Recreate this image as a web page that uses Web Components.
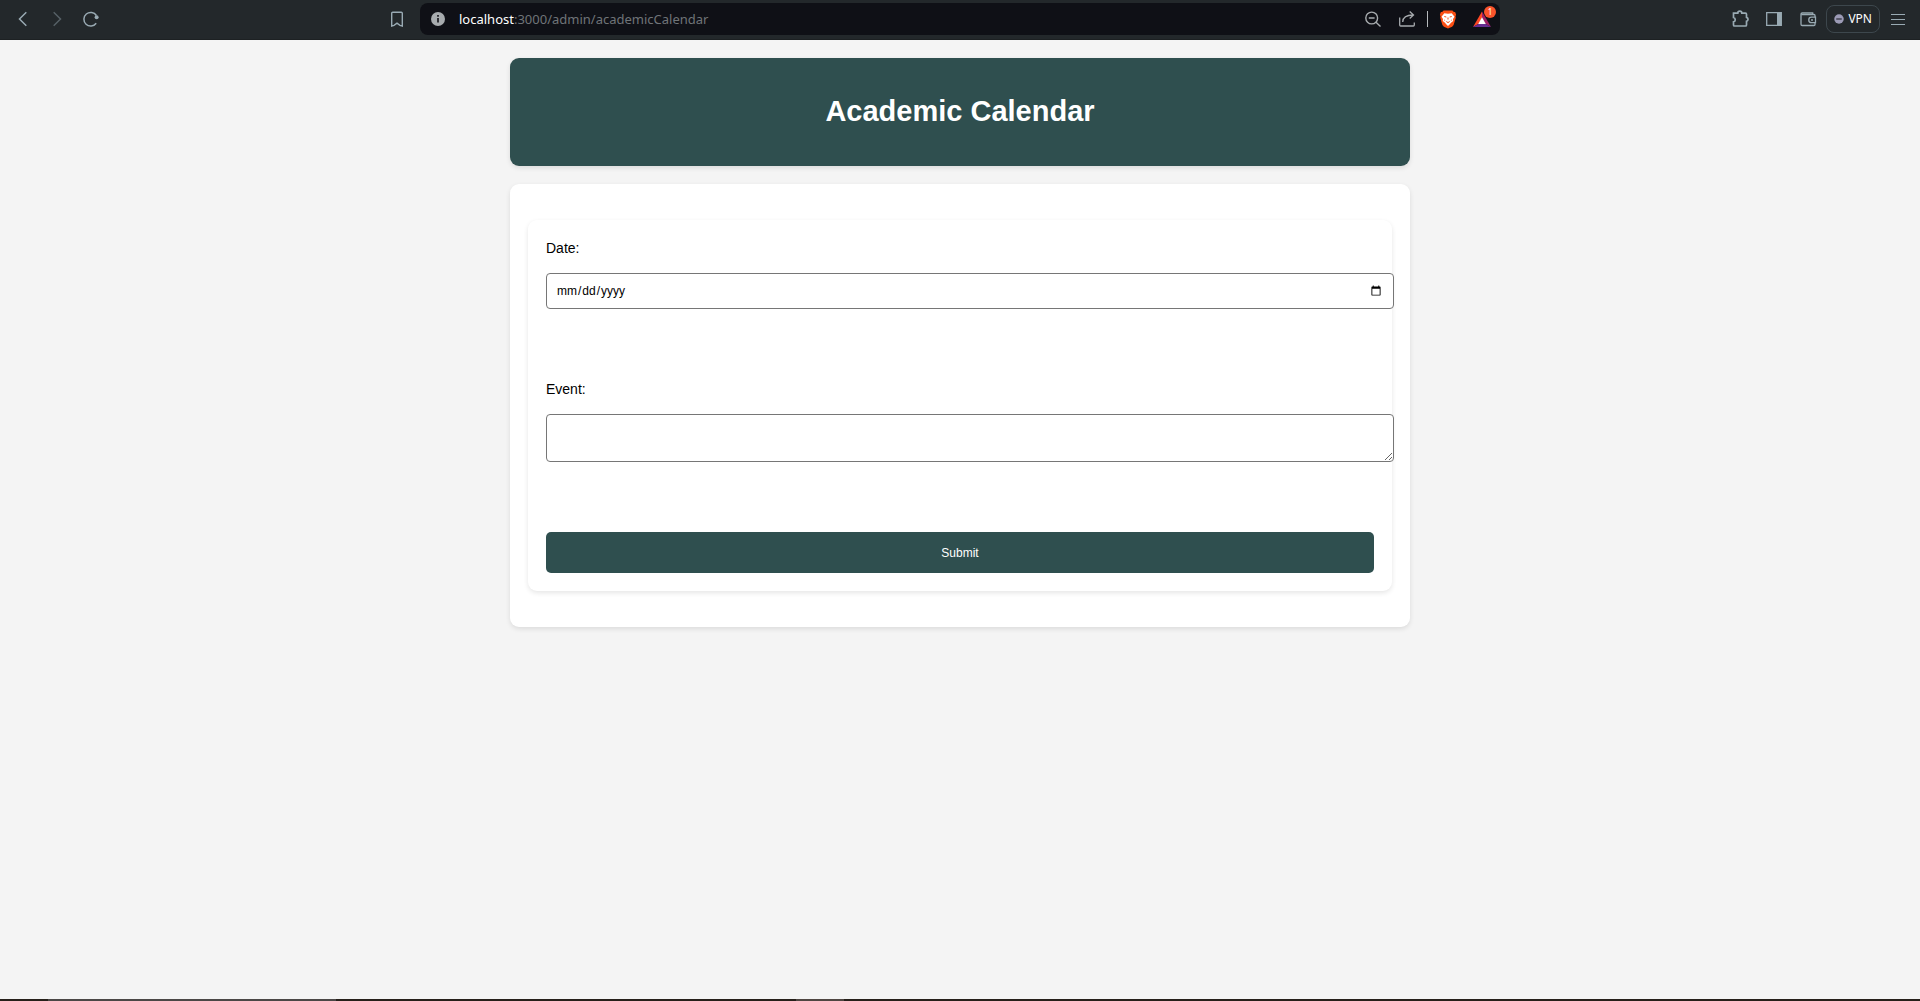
<!DOCTYPE html>
<html lang="en">
<head>
<meta charset="utf-8">
<title>Academic Calendar</title>
<style>
  html, body { margin: 0; height: 100%; }
  body { background: #f4f4f4; font-family: "Liberation Sans", Arial, sans-serif; font-size: 14px; color: #000; }
</style>
</head>
<body>
<app-window>
  <browser-toolbar slot="toolbar" host="localhost" path=":3000/admin/academicCalendar"></browser-toolbar>
  <page-banner>Academic Calendar</page-banner>
  <content-card><event-form></event-form></content-card>
  <task-strip slot="strip"></task-strip>
</app-window>

<script>
function define(name, html, setup) {
  const template = document.createElement('template');
  template.innerHTML = html;
  customElements.define(name, class extends HTMLElement {
    constructor() {
      super();
      this.attachShadow({ mode: 'open' }).append(template.content.cloneNode(true));
    }
    connectedCallback() { if (setup) setup(this, this.shadowRoot); }
  });
}

define('app-window', `
  <style>
    :host { display: flex; flex-direction: column; min-height: 100vh; }
    main { flex: 1; width: 100%; max-width: 900px; margin: 0 auto; padding: 18px 0; box-sizing: border-box;
           display: flex; flex-direction: column; gap: 18px; }
  </style>
  <slot name="toolbar"></slot>
  <main><slot></slot></main>
  <slot name="strip"></slot>`);

const icons = {
  back: '<path d="M13.3 3.300 6.500 10l6.800 6.700" stroke-width="1.500"/>',
  forward: '<path d="M6.700 3.300l6.800 6.700-6.800 6.700" stroke-width="1.500"/>',
  reload: '<path d="M15.200 14.200A6.800 6.800 0 1 1 15.400 6.500" stroke-width="1.500"/><circle cx="15.600" cy="8.300" r="2" fill="currentColor" stroke="none"/>',
  bookmark: '<path d="M4.700 4.200a1 1 0 0 1 1-1h8.600a1 1 0 0 1 1 1v12.800l-2.300-.6L10 14.200l-3 2.200-2.300.6z" stroke-width="1.400"/>',
  info: '<circle cx="10" cy="10" r="7" fill="currentColor" stroke="none"/><path d="M10 9v4.600M10 6v1.700" stroke="#0f1016" stroke-width="1.600"/>',
  zoomout: '<circle cx="8.700" cy="9" r="5.900" stroke-width="1.400"/><path d="M13 13.300l4.500 4.300M5.800 9h5.800" stroke-width="1.400"/>',
  share: '<path d="M2.700 8.500v7.500a1 1 0 0 0 1 1h12.600a1 1 0 0 0 1-1v-2.500M5.700 13c.2-4.500 3-7 10.300-7M12.700 2.500 16.500 6l-3.800 3.500" stroke-width="1.300"/>',
  brave: '<path d="M5.600 1.500h8.800l1.500 1.600h1.200l1 2.500-.6 2 .3 1.200-2.200 7.200-1.500 1.700L10 19.500l-4.100-1.800-1.500-1.700L2.200 8.800l.3-1.200-.6-2 1-2.500h1.200z" fill="#fb4f14" stroke="none"/><path d="M6.300 4.200 10 4.800l3.700-.6 2.800 3.500-1.500 2.200.2 2-2.200 1.800-1.200 1.600L10 17l-1.800-1.700L7 13.700l-2.200-1.800.2-2-1.500-2.200z" fill="#fff" stroke="none"/><path d="M6.300 7.500l2 .5M13.700 7.500l-2 .5M8.300 12.500 10 13.600l1.700-1.100M6.300 11l.8.600M13.700 11l-.8.600M10 8.500v2" stroke="#fb4f14" stroke-width="1"/>',
  bat: '<path d="M10 2.500 1 18l5.700-3.300L10 9z" fill="#ff4724" stroke="none"/><path d="M10 2.500 19 18l-5.700-3.300L10 9z" fill="#9e1f63" stroke="none"/><path d="M1 18h18l-5.700-3.300H6.700z" fill="#662d91" stroke="none"/><path d="M10 8.200l3.800 6.700H6.200z" fill="#fff" stroke="none"/>',
  puzzle: '<path d="M3.500 4.200h4.300a2 2 0 0 1 4 0h3.700a1 1 0 0 1 1 1v3.200a2 2 0 0 1 0 3.900v3.700a1 1 0 0 1-1 1h-11a1 1 0 0 1-1-1v-3.200a2.200 2.200 0 0 0 0-4.300z" stroke-width="1.700"/>',
  sidebar: '<path d="M2.700 3.700h14.600v12.600H2.700z" stroke-width="1.300"/><path d="M13 3.700h4.300v12.600H13z" fill="currentColor" stroke="none"/>',
  wallet: '<path d="M17 8V6.500a1 1 0 0 0-1-1H3.700M3 5a1.200 1.200 0 0 1 1.200-1.200h10.500V5.500M3 5v10.300a1.200 1.200 0 0 0 1.200 1.200H16a1 1 0 0 0 1-1V14M17.500 8.200h-4a2.700 2.700 0 0 0 0 5.500h4zM13 11h2" stroke-width="1.300"/>',
  vpn: '<circle cx="10" cy="10" r="9.500" fill="#9c9bb6" stroke="none"/><path d="M4.500 10h11" stroke="#343440" stroke-width="2.600"/>',
  menu: '<path d="M3 5.500h14M3 10.500h14M3 15.500h14" stroke-width="1.200"/>'
};

define('line-icon', `
  <style>
    :host { display: block; flex: none; width: 20px; height: 20px; }
    svg { display: block; width: 100%; height: 100%; }
  </style>
  <svg viewBox="0 0 20 20" fill="none" stroke="currentColor" aria-hidden="true"></svg>`,
  (el, root) => { root.querySelector('svg').innerHTML = icons[el.getAttribute('name')]; });

define('browser-toolbar', `
  <style>
    :host { display: flex; justify-content: space-between; align-items: center; height: 40px; flex: none;
            box-sizing: border-box; padding-bottom: 2px; background: #23282b; color: #99aab3;
            border-bottom: 1px solid #1d2123; font-family: "Noto Sans", sans-serif; }
    .group { display: flex; align-items: center; flex: 1 1 420px; box-sizing: border-box; }
    .start { justify-content: space-between; padding: 0 13px; }
    .nav { display: flex; gap: 14px; }
    .end { justify-content: flex-end; gap: 14px; padding-right: 12px; }
    button { appearance: none; border: 0; padding: 0; background: none; color: inherit; font: inherit; display: flex; align-items: center; }
    button[disabled] { color: #566066; }
    .address { flex: 0 1 1080px; box-sizing: border-box; height: 32px; display: flex; align-items: center; gap: 11px;
               padding: 0 8px; background: #0f1016; border-radius: 8px; color: #a7abae; }
    .url { flex: 1; white-space: nowrap; color: #6f7478; font-size: 13px; line-height: 20px; }
    .url b { font-weight: 400; color: #fff; }
    .bar { width: 1px; height: 16px; background: #b6babd; }
    .rewards { position: relative; }
    .badge { position: absolute; left: 12px; top: -3px; width: 12px; height: 12px; border-radius: 50%;
             background: #fb542b; color: #fff; font-size: 8px; line-height: 12px; text-align: center; }
    .tools { display: flex; align-items: center; gap: 14px; }
    .divided { display: flex; align-items: center; gap: 10px; }
    .pair { display: flex; align-items: center; gap: 8px; }
    .pill { box-sizing: border-box; height: 28px; padding: 0 7px; gap: 4px; border: 1px solid #3d474d; border-radius: 8px;
            color: #fff; font-size: 12px; }
    .pill line-icon { width: 10px; height: 10px; }
  </style>
  <div class="group start">
    <div class="nav">
      <button aria-label="Back"><line-icon name="back"></line-icon></button>
      <button aria-label="Forward" disabled><line-icon name="forward"></line-icon></button>
      <button aria-label="Reload"><line-icon name="reload"></line-icon></button>
    </div>
    <button aria-label="Bookmark"><line-icon name="bookmark"></line-icon></button>
  </div>
  <div class="address">
    <button aria-label="Site information"><line-icon name="info"></line-icon></button>
    <div class="url"><b></b><span></span></div>
    <div class="tools">
      <button aria-label="Zoom out"><line-icon name="zoomout"></line-icon></button>
      <div class="divided">
        <button aria-label="Share"><line-icon name="share"></line-icon></button>
        <span class="bar"></span>
        <button aria-label="Shields"><line-icon name="brave"></line-icon></button>
      </div>
      <button class="rewards" aria-label="Rewards"><line-icon name="bat"></line-icon><span class="badge">1</span></button>
    </div>
  </div>
  <div class="group end">
    <button aria-label="Extensions"><line-icon name="puzzle"></line-icon></button>
    <button aria-label="Sidebar"><line-icon name="sidebar"></line-icon></button>
    <div class="pair">
      <button aria-label="Wallet"><line-icon name="wallet"></line-icon></button>
      <button class="pill"><line-icon name="vpn"></line-icon>VPN</button>
      <button aria-label="Menu"><line-icon name="menu"></line-icon></button>
    </div>
  </div>`,
  (el, root) => {
    root.querySelector('.url b').textContent = el.getAttribute('host');
    root.querySelector('.url span').textContent = el.getAttribute('path');
  });

define('page-banner', `
  <style>
    :host { display: block; padding: 36px 18px 38px; border-radius: 9px; background: #2f4f4f; color: #fff;
            text-align: center; box-shadow: 0 2px 5px rgba(0,0,0,.1); }
    h1 { margin: 0; font-size: 29px; line-height: 34px; font-weight: 700; }
  </style>
  <h1><slot></slot></h1>`);

define('content-card', `
  <style>
    :host { display: block; padding: 36px 18px; border-radius: 9px; background: #fff; box-shadow: 0 2px 5px rgba(0,0,0,.1); }
  </style>
  <slot></slot>`);

define('event-form', `
  <style>
    :host { display: block; padding: 18px; border-radius: 9px; background: #fff; box-shadow: 0 2px 5px rgba(0,0,0,.1); }
    form { display: flex; flex-direction: column; gap: 70px; }
    .field { display: flex; flex-direction: column; gap: 15px; }
    label { font-size: 14px; line-height: 20px; }
    input, textarea { box-sizing: content-box; width: 100%; margin: 0; padding: 9px; border: 1px solid #767676;
                      border-radius: 4px; background: #fff; color: #000; font: 12px/16px "Liberation Sans", Arial, sans-serif; }
    input { height: 16px; }
    textarea { height: 28px; display: block; }
    button { height: 41px; border: 0; border-radius: 5px; background: #2f4f4f; color: #fff;
             font: 12px "Liberation Sans", Arial, sans-serif; }
  </style>
  <form>
    <div class="field"><label for="date">Date:</label><input id="date" type="date"></div>
    <div class="field"><label for="event">Event:</label><textarea id="event"></textarea></div>
    <button type="submit">Submit</button>
  </form>`);

define('task-strip', `
  <style>
    :host { display: flex; flex: none; height: 2px; background: #26201a; }
    .lead { flex: 0 0 48px; }
    .active { flex: 0 0 288px; background: #4b4746; }
    .gap { flex: 0 0 460px; }
    .item { flex: 0 0 48px; background: #4f4642; }
  </style>
  <span class="lead"></span><span class="active"></span><span class="gap"></span><span class="item"></span>`);
</script>
</body>
</html>
